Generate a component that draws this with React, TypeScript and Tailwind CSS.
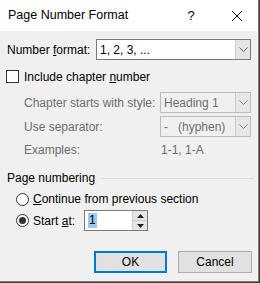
import React from 'react';

const font = { fontFamily: '"Liberation Sans", "Noto Sans", sans-serif' };

function Chevron( { disabled }: { disabled?: boolean } ) {
	return (
		<svg width="9" height="5" viewBox="0 0 9 5" className="block">
			<path
				d="M0.5 0.5 L4.5 4.5 L8.5 0.5"
				fill="none"
				stroke={ disabled ? '#8a8a8a' : '#606060' }
				strokeWidth="1"
			/>
		</svg>
	);
}

function Combo( {
	value,
	width,
	disabled,
}: {
	value: string;
	width: string;
	disabled?: boolean;
} ) {
	return (
		<div
			className={ `flex shrink-0 h-[21px] ${ width } border ${
				disabled
					? 'border-[#bcbcbc] bg-[#f0f0f0] text-[#6d6d6d]'
					: 'border-[#7a7a7a] bg-white text-black'
			}` }
		>
			<div className="flex-1 flex items-center pl-[3px] whitespace-pre">{ value }</div>
			<div
				className={ `w-[15px] flex items-center justify-center border-l ${
					disabled ? 'border-[#cccccc] bg-[#e6e6e6]' : 'border-[#cccccc] bg-[#e5e5e5]'
				}` }
			>
				<Chevron disabled={ disabled } />
			</div>
		</div>
	);
}

function Radio( { checked }: { checked?: boolean } ) {
	return (
		<div className="w-[13px] h-[13px] shrink-0 rounded-full border border-[#333333] bg-white flex items-center justify-center">
			{ checked && <div className="w-[7px] h-[7px] rounded-full bg-[#333333]" /> }
		</div>
	);
}

export default function App() {
	return (
		<div
			className="w-[260px] h-[283px] bg-[#3c3c3c] text-[12px] text-black whitespace-nowrap"
			style={ font }
		>
			<div className="w-[259px] h-[282px] bg-[#f0f0f0] border-r border-b border-[#7a7a7a] flex flex-col">
				<div className="h-[31px] bg-white flex items-center shrink-0">
					<span className="pl-[8px] flex-1 text-[12.5px]">Page Number Format</span>
					<span className="w-[14px] text-center mr-[33px] text-[13px]">?</span>
					<svg width="12" height="12" viewBox="0 0 12 12" className="mr-[15px]">
						<path d="M1 1 L11 11 M11 1 L1 11" stroke="#111" strokeWidth="1" />
					</svg>
				</div>

				<div className="mt-[8px] flex items-center h-[21px] pl-[7px]">
					<span className="w-[89px] shrink-0">
						Number <span className="underline">f</span>ormat:
					</span>
					<Combo value="1, 2, 3, ..." width="w-[155px]" />
				</div>

				<div className="mt-[10px] h-[13px] flex items-center pl-[6px]">
					<div className="w-[13px] h-[13px] border border-[#333333] bg-white" />
					<span className="ml-[5px]">
						Include chapter <span className="underline">n</span>umber
					</span>
				</div>

				<div className="mt-[9px] flex items-center h-[21px] pl-[24px] text-[#6d6d6d]">
					<span className="w-[136px] shrink-0">Chapter starts with style:</span>
					<Combo value="Heading 1" width="w-[91px]" disabled />
				</div>
				<div className="mt-[3px] flex items-center h-[21px] pl-[24px] text-[#6d6d6d]">
					<span className="w-[136px] shrink-0">Use separator:</span>
					<Combo value="-   (hyphen)" width="w-[91px]" disabled />
				</div>
				<div className="mt-[6px] flex items-center h-[14px] pl-[24px] text-[#6d6d6d]">
					<span className="w-[136px] shrink-0">Examples:</span>
					<span className="pl-[1px]">1-1, 1-A</span>
				</div>

				<div className="mt-[13px] flex items-center h-[16px] pl-[7px]">
					<span>Page numbering</span>
					<div className="flex-1 ml-[6px] mr-[4px] h-px bg-[#dcdcdc]" />
				</div>

				<div className="mt-[5px] flex items-center h-[16px] pl-[16px]">
					<Radio />
					<span className="ml-[4px]">
						<span className="underline">C</span>ontinue from previous section
					</span>
				</div>

				<div className="mt-[3px] flex items-center h-[21px] pl-[16px]">
					<Radio checked />
					<span className="ml-[4px] w-[51px] shrink-0">
						Start <span className="underline">a</span>t:
					</span>
					<div className="flex h-[21px] w-[64px] border border-[#7a7a7a] bg-white">
						<div className="flex-1 flex items-center pl-[3px]">
							<span className="bg-[#99c9ef] px-px leading-[15px]">1</span>
						</div>
						<div className="w-[15px] flex flex-col border-l border-[#cccccc]">
							<div className="flex-1 bg-[#e5e5e5] flex items-center justify-center border-b border-[#cccccc]">
								<svg width="7" height="4" viewBox="0 0 7 4">
									<path d="M0 4 L3.5 0 L7 4 Z" fill="#222" />
								</svg>
							</div>
							<div className="flex-1 bg-[#e5e5e5] flex items-center justify-center">
								<svg width="7" height="4" viewBox="0 0 7 4">
									<path d="M0 0 L3.5 4 L7 0 Z" fill="#222" />
								</svg>
							</div>
						</div>
					</div>
				</div>

				<div className="mt-[20px] flex pl-[94px] gap-[11px]">
					<button className="w-[73px] h-[22px] border-2 border-[#0078d7] bg-[#e1e1e1] text-[12px]">
						OK
					</button>
					<button className="w-[74px] h-[22px] border border-[#adadad] bg-[#e1e1e1] text-[12px]">
						Cancel
					</button>
				</div>
			</div>
		</div>
	);
}
